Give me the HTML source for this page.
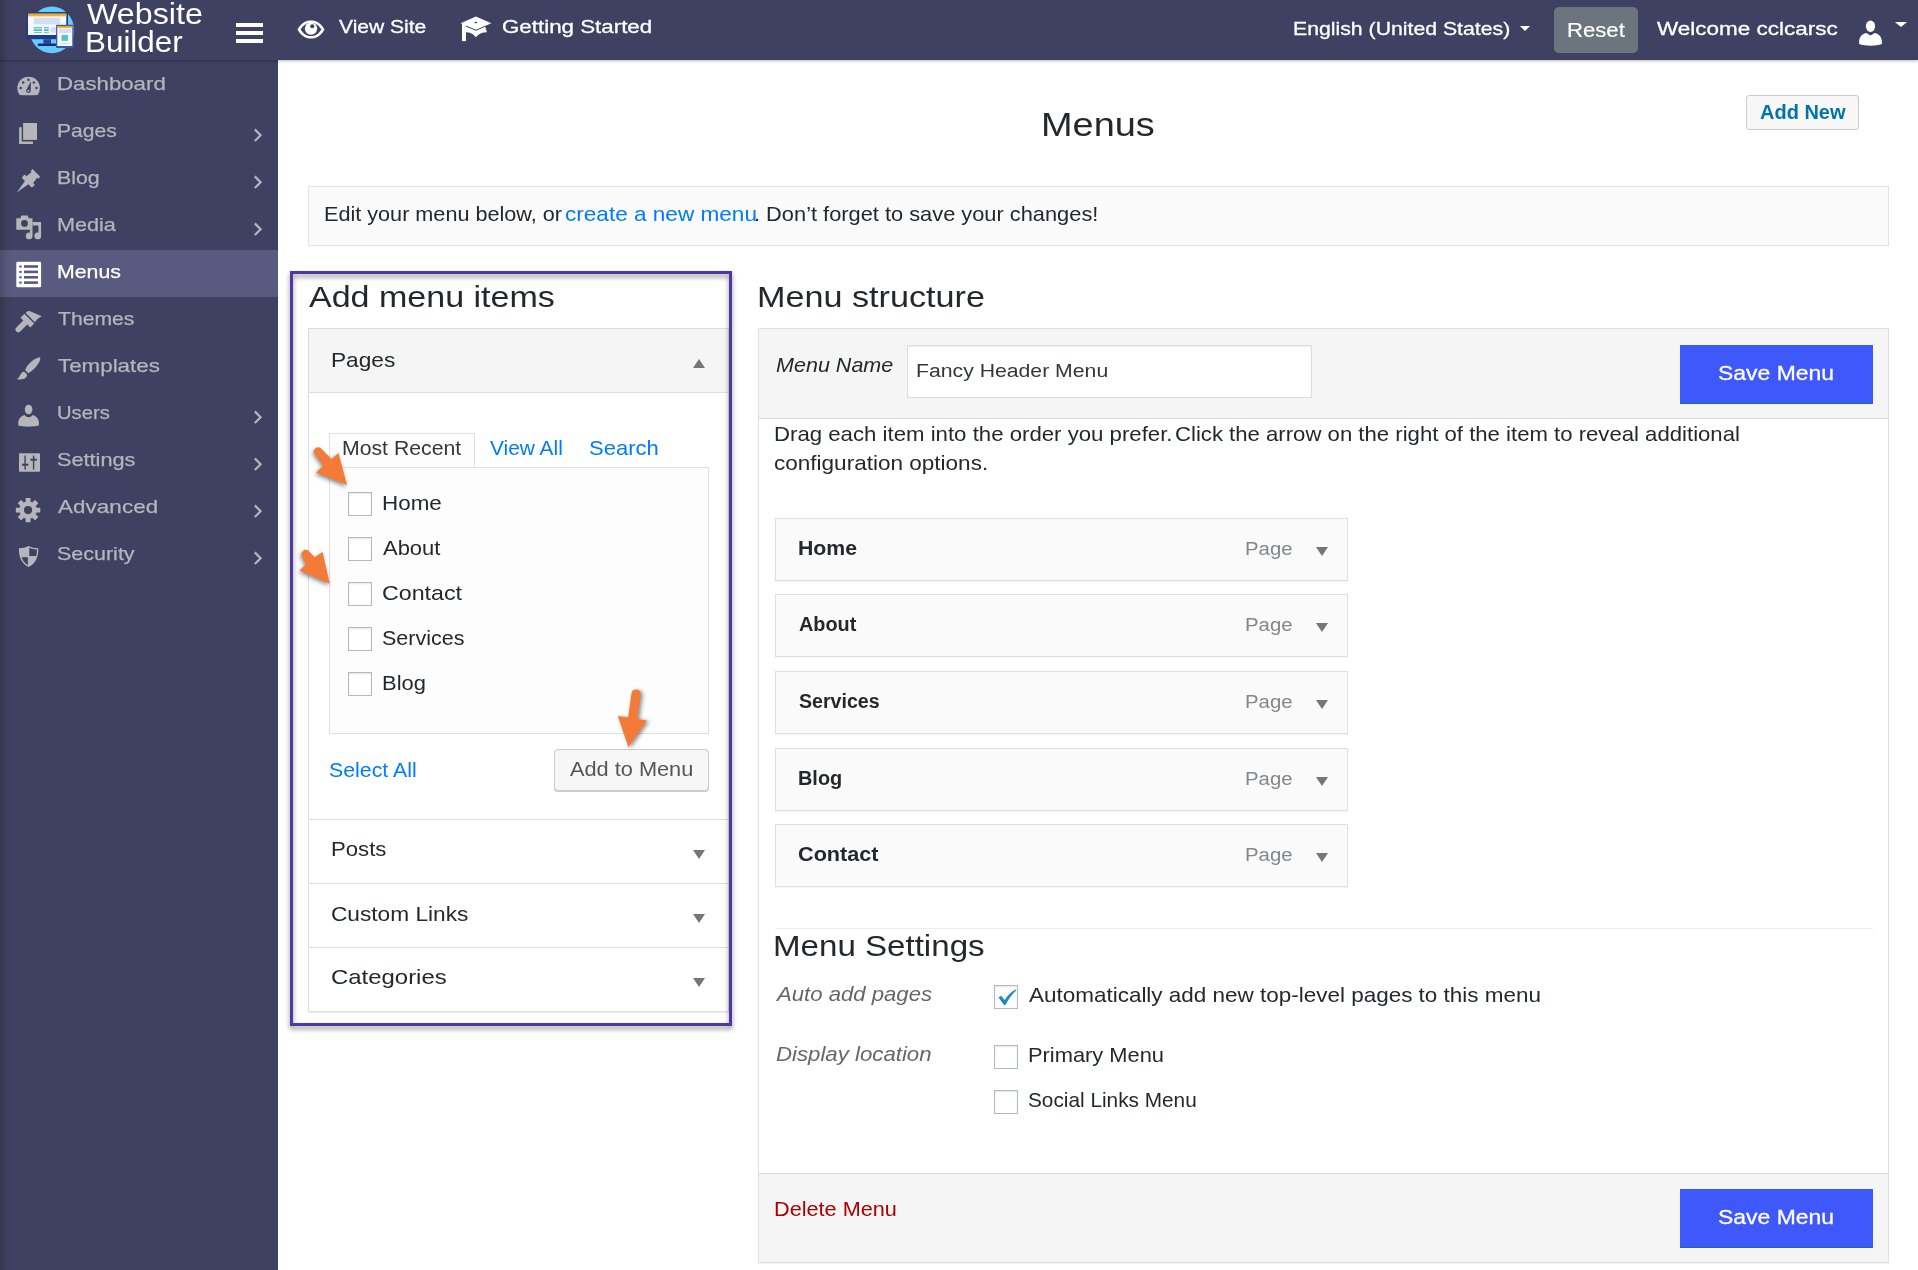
<!DOCTYPE html>
<html lang="en">
<head>
<meta charset="utf-8">
<title>Menus - Website Builder</title>
<style>
*{box-sizing:border-box}
html,body{margin:0;padding:0}
body{width:1918px;height:1270px;overflow:hidden;background:#fff;font-family:"Liberation Sans", Arial, sans-serif;color:#23282d;position:relative}
header,nav,main,section,ul,li,h1,h2,h3,p,form,label{margin:0;padding:0;list-style:none;font-weight:400;font-size:inherit}
a{color:#007bff;text-decoration:none}
.t{position:absolute;white-space:nowrap;line-height:1;display:block;transform-origin:0 0}
.b{position:absolute;display:block}
svg{position:absolute;overflow:visible;display:block}
/* top bar */
#topbar{left:0;top:0;width:1918px;height:60px;background:#3e4161;background-image:linear-gradient(to right,#34364f 0,#3a3c5b 5px,#3e4161 11px,#3e4161 100%);box-shadow:0 1px 3px rgba(0,0,0,.28);z-index:5}
#sidebar{left:0;top:60px;width:278px;height:1210px;background:#3e4161;background-image:linear-gradient(to right,#34364f 0,#3a3c5b 5px,#3e4161 11px);z-index:4}
#active{left:0;top:250px;width:278px;height:47px;background:#585a7f;background-image:linear-gradient(to right,#4b4d6c 0,#535578 5px,#585a7f 11px);z-index:4}
.z6{z-index:6}
#topbar ~ .t, header .t, header svg, header .b{z-index:6}
nav .t, nav svg{z-index:6}
.chev{stroke:#b5b5ba;stroke-width:2.2;fill:none}
/* generic boxes */
.cb{position:absolute;width:24px;height:24px;background:#fff;border:1px solid #b4b9be;box-shadow:inset 0 1px 2px rgba(0,0,0,.1)}
.tri{position:absolute;width:0;height:0;border-left:6px solid transparent;border-right:6px solid transparent;border-top:9px solid #72777c}
.tri.up{border-top:none;border-bottom:9px solid #72777c}
.item{position:absolute;left:775px;width:573px;height:62.500px;background:#fafafa;border:1px solid #dfdfdf;box-shadow:0 1px 1px rgba(0,0,0,.04)}
.savebtn{position:absolute;left:1680px;width:193px;height:59.400px;background:#3f58fb;border-bottom:1.400px solid #12709e}
</style>
</head>
<body>

<!-- ================= TOP BAR ================= -->
<header>
  <div class="b" id="topbar"></div>
  <!--LOGO-->
  <svg class="z6" style="left:20px;top:0" width="70" height="60" viewBox="20 0 70 60">
    <defs><linearGradient id="og" x1="0" y1="0" x2="0" y2="1"><stop offset="0" stop-color="#f39c12"/><stop offset="1" stop-color="#fbbf24"/></linearGradient></defs>
    <ellipse cx="51.800" cy="29.900" rx="22.300" ry="23.300" fill="#63cbff"/>
    <rect x="26.400" y="12" width="41.600" height="27.200" fill="#1e3a8c"/>
    <rect x="28" y="13.700" width="38.300" height="21.300" fill="#f7f7ff"/>
    <rect x="28" y="13.700" width="38.300" height="2.700" fill="url(#og)"/>
    <rect x="33.700" y="17.700" width="26.500" height="6.600" fill="#d6ddf8"/>
    <g fill="#3fc1c4"><rect x="33.700" y="27.200" width="8.300" height="1.200"/><rect x="33.700" y="29.300" width="8.300" height="1.700"/><rect x="33.700" y="32.100" width="8.300" height="0.800"/><rect x="44" y="27.200" width="4.800" height="1.200"/><rect x="44" y="29.300" width="4.800" height="1.700"/><rect x="44" y="32.100" width="4.800" height="0.800"/></g>
    <rect x="50.700" y="27" width="5.300" height="5.600" fill="#d6ddf8"/>
    <rect x="43.400" y="39.200" width="7.600" height="4.600" fill="#2546a0"/>
    <rect x="37.700" y="43.600" width="18.500" height="2.500" rx="1" fill="#172a78"/>
    <rect x="56.100" y="24.800" width="17.500" height="23.200" fill="#3558b0"/>
    <rect x="57.300" y="26" width="15" height="20" fill="#f7f7ff"/>
    <rect x="57.300" y="26" width="15" height="2.100" fill="url(#og)"/>
    <rect x="59" y="28.800" width="12" height="4.200" fill="#d6ddf8"/>
    <rect x="61.500" y="35" width="6.500" height="5.900" fill="#52c7c9"/>
    <rect x="60.500" y="43" width="8.500" height="0.800" fill="#c9d2f3"/>
  </svg>
  <h1><span class="t" id="t_web" style="left:86.90px;top:-0.32px;font-size:28.63px;color:#ffffff;transform:scaleX(1.1261);">Website</span><span class="t" id="t_bld" style="left:85.28px;top:27.68px;font-size:28.63px;color:#ffffff;transform:scaleX(1.0964);">Builder</span></h1>
  <!-- hamburger -->
  <div class="b z6" style="left:236px;top:23px;width:27px;height:4px;background:#fff"></div>
  <div class="b z6" style="left:236px;top:31px;width:27px;height:4px;background:#fff"></div>
  <div class="b z6" style="left:236px;top:39px;width:27px;height:4px;background:#fff"></div>
  <!-- eye -->
  <svg class="z6" style="left:297px;top:20px" width="28" height="19" viewBox="0 0 28 19">
    <path d="M0.5 9.5 C5 1.5 10 0.5 14 0.5 C18 0.5 23 1.5 27.5 9.5 C23 17.5 18 18.5 14 18.5 C10 18.5 5 17.5 0.5 9.5 Z" fill="#fff"/>
    <path d="M3.6 9.5 C7 4 10.5 3 14 3 C17.5 3 21 4 24.4 9.5 C21 15 17.5 16 14 16 C10.500 16 7 15 3.6 9.5 Z" fill="#3e4161"/>
    <circle cx="14" cy="8.6" r="6.2" fill="#fff"/>
    <circle cx="15.2" cy="6.2" r="2" fill="#3e4161"/>
  </svg>
  <span class="t" id="t_view" style="left:339.00px;top:18.10px;font-size:18.80px;color:#ffffff;transform:scaleX(1.1202);-webkit-text-stroke:.3px #fff;">View Site</span>
  <!-- grad cap -->
  <svg class="z6" style="left:455px;top:10px" width="42" height="38" viewBox="455 10 42 38">
    <path d="M460.600 23.200 L475.900 16.600 L491.400 23.200 L475.900 29.700 Z" fill="#fff"/>
    <path d="M465.800 26.400 L475.900 30.800 L485.300 26.700 L486.900 32.300 C482 32.300 478.500 34 475.900 37.300 C473.300 34 470 32.300 465.800 32.300 Z" fill="#fff"/>
    <rect x="462" y="23.600" width="4" height="17.500" fill="#fff"/>
    <ellipse cx="475.800" cy="22.400" rx="1.400" ry="0.750" fill="#3e4161"/>
  </svg>
  <span class="t" id="t_get" style="left:502.18px;top:18.10px;font-size:18.80px;color:#ffffff;transform:scaleX(1.1888);-webkit-text-stroke:.3px #fff;">Getting Started</span>
  <span class="t" id="t_eng" style="left:1292.65px;top:20.10px;font-size:18.80px;color:#ffffff;transform:scaleX(1.1309);-webkit-text-stroke:.3px #fff;">English (United States)</span>
  <div class="tri z6" style="left:1520px;top:26px;border-left-width:5.5px;border-right-width:5.5px;border-top:5.5px solid #fff"></div>
  <div class="b z6" style="left:1554px;top:7px;width:84px;height:46px;border-radius:5px;background:#6c757d"></div>
  <span class="t" id="t_reset" style="left:1567.27px;top:19.80px;font-size:20.39px;color:#ffffff;transform:scaleX(1.0858);-webkit-text-stroke:.2px #fff;">Reset</span>
  <span class="t" id="t_welc" style="left:1656.79px;top:20.10px;font-size:18.80px;color:#ffffff;transform:scaleX(1.1969);-webkit-text-stroke:.3px #fff;">Welcome cclcarsc</span>
  <!-- user -->
  <svg class="z6" style="left:1850px;top:8px" width="68" height="46" viewBox="1850 8 68 46">
    <ellipse cx="1870.500" cy="26.300" rx="4.600" ry="5.700" fill="#fff"/>
    <path d="M1859.200 44 C1858.600 37.500 1861.500 34.200 1866.200 33 L1870.500 35.600 L1874.800 33 C1879.500 34.200 1882.500 37.500 1881.900 44 C1876 46.300 1865 46.300 1859.200 44 Z" fill="#fff"/>
    <path d="M1894.900 21.900 H1907.100 L1901 27.100 Z" fill="#fff"/>
  </svg>
</header>

<!-- ================= SIDEBAR ================= -->
<nav>
  <div class="b" id="sidebar"></div>
  <div class="b" id="active"></div>
  <ul>
    <li><svg style="left:0;top:66px" width="60" height="47" viewBox="0 66 60 47"><path d="M19.600 95 Q17.300 92 17.300 88 A11.300 11.300 0 0 1 39.900 88 Q39.900 92 37.600 95 Q28.600 95.500 19.600 95 Z" fill="#b5b5ba"/>
<g fill="#3e4161"><circle cx="20.700" cy="88" r="1.250"/><circle cx="23.200" cy="82.400" r="1.250"/><circle cx="28.400" cy="79.800" r="1.250"/><circle cx="33.900" cy="82.400" r="1.250"/><circle cx="36.500" cy="88" r="1.250"/>
<path d="M26.200 90.300 L30.900 81.300 L30.700 91.200 A2.300 2.300 0 0 1 26.200 90.300 Z"/></g><circle cx="28.400" cy="90.800" r="1" fill="#b5b5ba"/></svg><span class="t" id="s_dashboard" style="left:56.70px;top:75.33px;font-size:18.33px;color:#b5b5ba;transform:scaleX(1.2128);-webkit-text-stroke:.25px #b5b5ba;">Dashboard</span></li>
    <li><svg style="left:0;top:113px" width="60" height="47" viewBox="0 113 60 47"><rect x="23.100" y="123" width="13.900" height="16.900" fill="#b5b5ba"/><path d="M19.100 127.200 H21.700 V141.400 H33 V144.100 H19.100 Z" fill="#b5b5ba"/></svg><span class="t" id="s_pages" style="left:56.70px;top:122.33px;font-size:18.33px;color:#b5b5ba;transform:scaleX(1.1497);-webkit-text-stroke:.25px #b5b5ba;">Pages</span><svg style="left:250px;top:125.69999999999999px" width="16" height="18" viewBox="250 125.69999999999999 16 18"><path class="chev" d="M254.800 129.1 L260.600 134.9 L254.800 140.7"/></svg></li>
    <li><svg style="left:0;top:160px" width="60" height="47" viewBox="0 160 60 47"><g transform="translate(36.400 172.900) rotate(45)" fill="#b5b5ba"><path d="M-5.400 0 H5.400 V2.800 H4 L4.800 9.400 H7.200 Q7.700 12.800 6.600 13.800 H2.400 L0 27.800 L-2.400 13.800 H-6.600 Q-7.700 12.800 -7.200 9.400 H-4.800 L-4 2.800 H-5.400 Z"/></g></svg><span class="t" id="s_blog" style="left:56.70px;top:169.33px;font-size:18.33px;color:#b5b5ba;transform:scaleX(1.1655);-webkit-text-stroke:.25px #b5b5ba;">Blog</span><svg style="left:250px;top:172.7px" width="16" height="18" viewBox="250 172.7 16 18"><path class="chev" d="M254.800 176.1 L260.600 181.9 L254.800 187.7"/></svg></li>
    <li><svg style="left:0;top:207px" width="60" height="47" viewBox="0 207 60 47"><path d="M16.300 218.300 H20.200 L21.400 215.500 H27.600 L28.800 218.300 H32.500 V229.800 H16.300 Z" fill="#b5b5ba"/><circle cx="24.500" cy="223.400" r="3.400" fill="#3e4161"/>
<path d="M32.500 222.100 H41.100 V236 A3.350 3.350 0 1 1 38.400 232.700 V225.400 H32.500 Z" fill="#b5b5ba"/><path d="M29.900 229.800 H32.500 V236 A3.350 3.350 0 1 1 29.900 232.700 Z" fill="#b5b5ba"/></svg><span class="t" id="s_media" style="left:56.70px;top:216.33px;font-size:18.33px;color:#b5b5ba;transform:scaleX(1.1788);-webkit-text-stroke:.25px #b5b5ba;">Media</span><svg style="left:250px;top:219.7px" width="16" height="18" viewBox="250 219.7 16 18"><path class="chev" d="M254.800 223.1 L260.600 228.9 L254.800 234.7"/></svg></li>
    <li><svg style="left:0;top:254px" width="60" height="47" viewBox="0 254 60 47"><rect x="16.300" y="261.800" width="24.800" height="25.400" rx="1.200" fill="#fff"/><g fill="#585a7f"><rect x="24" y="265.2" width="14" height="2.600"/><rect x="19.200" y="265.5" width="2.500" height="2"/><rect x="24" y="270.6" width="14" height="2.600"/><rect x="19.200" y="270.9" width="2.500" height="2"/><rect x="24" y="276" width="14" height="2.600"/><rect x="19.200" y="276.3" width="2.500" height="2"/><rect x="24" y="281.3" width="14" height="2.600"/><rect x="19.200" y="281.6" width="2.500" height="2"/></g></svg><span class="t" id="s_menus" style="left:56.70px;top:263.33px;font-size:18.33px;color:#ffffff;transform:scaleX(1.1622);-webkit-text-stroke:.25px #ffffff;">Menus</span></li>
    <li><svg style="left:0;top:301px" width="60" height="47" viewBox="0 301 60 47"><path d="M18.300 329.400 L25.500 322.200" stroke="#b5b5ba" stroke-width="5.600" stroke-linecap="round" fill="none"/>
<path d="M21.300 317.700 L24.400 314.600 L33.400 323.600 L30.300 326.700 Z" fill="#b5b5ba" stroke="#b5b5ba" stroke-width="1.200" stroke-linejoin="round"/>
<path d="M25.700 313.100 Q26.400 310.700 29.600 310.900 L41.700 316.300 Q37 318.500 34.900 322.300 Z" fill="#b5b5ba"/></svg><span class="t" id="s_themes" style="left:57.60px;top:310.33px;font-size:18.33px;color:#b5b5ba;transform:scaleX(1.1541);-webkit-text-stroke:.25px #b5b5ba;">Themes</span></li>
    <li><svg style="left:0;top:348px" width="60" height="47" viewBox="0 348 60 47"><path d="M40.200 357.200 C41 360 37 368 28.200 373.200 L25.100 370.100 C27 364 35 357.500 40.200 357.200 Z" fill="#b5b5ba"/>
<path d="M24.100 371.400 L27 374.300 C27.500 378.500 22 380.600 16.800 378.900 C20.500 377.500 19.500 372.500 24.100 371.400 Z" fill="#b5b5ba"/></svg><span class="t" id="s_templates" style="left:57.60px;top:357.33px;font-size:18.33px;color:#b5b5ba;transform:scaleX(1.2191);-webkit-text-stroke:.25px #b5b5ba;">Templates</span></li>
    <li><svg style="left:0;top:395px" width="60" height="47" viewBox="0 395 60 47"><ellipse cx="28.600" cy="409.500" rx="3.800" ry="4.800" fill="#b5b5ba"/>
<path d="M18.300 425.600 C17.600 419 20.500 416.300 24.600 415 C26.800 418 30.400 418 32.600 415 C36.700 416.300 39.600 419 38.900 425.600 C34 427 23 427 18.300 425.600 Z" fill="#b5b5ba"/></svg><span class="t" id="s_users" style="left:56.70px;top:404.33px;font-size:18.33px;color:#b5b5ba;transform:scaleX(1.1018);-webkit-text-stroke:.25px #b5b5ba;">Users</span><svg style="left:250px;top:407.7px" width="16" height="18" viewBox="250 407.7 16 18"><path class="chev" d="M254.800 411.1 L260.600 416.9 L254.800 422.7"/></svg></li>
    <li><svg style="left:0;top:442px" width="60" height="47" viewBox="0 442 60 47"><rect x="19" y="453.300" width="21" height="18.500" rx="0.800" fill="#b5b5ba"/><g fill="#3e4161"><rect x="24.400" y="455.600" width="1.400" height="14"/><rect x="32.900" y="455.600" width="1.400" height="14"/><rect x="22" y="463.700" width="6.400" height="2"/><rect x="30.400" y="458.700" width="6.400" height="2"/></g></svg><span class="t" id="s_settings" style="left:56.70px;top:451.33px;font-size:18.33px;color:#b5b5ba;transform:scaleX(1.1840);-webkit-text-stroke:.25px #b5b5ba;">Settings</span><svg style="left:250px;top:454.7px" width="16" height="18" viewBox="250 454.7 16 18"><path class="chev" d="M254.800 458.1 L260.600 463.9 L254.800 469.7"/></svg></li>
    <li><svg style="left:0;top:489px" width="60" height="47" viewBox="0 489 60 47"><g transform="translate(28.060 510.100)"><g fill="#b5b5ba"><circle r="8.800"/><rect x="-2.450" y="-12.200" width="4.900" height="24.400" rx="0.600" transform="rotate(0)"/><rect x="-2.450" y="-12.200" width="4.900" height="24.400" rx="0.600" transform="rotate(45)"/><rect x="-2.450" y="-12.200" width="4.900" height="24.400" rx="0.600" transform="rotate(90)"/><rect x="-2.450" y="-12.200" width="4.900" height="24.400" rx="0.600" transform="rotate(135)"/></g><circle r="4.100" fill="#3e4161"/></g></svg><span class="t" id="s_advanced" style="left:57.60px;top:498.33px;font-size:18.33px;color:#b5b5ba;letter-spacing:0.079px;transform:scaleX(1.2200);-webkit-text-stroke:.25px #b5b5ba;">Advanced</span><svg style="left:250px;top:501.7px" width="16" height="18" viewBox="250 501.7 16 18"><path class="chev" d="M254.800 505.1 L260.600 510.9 L254.800 516.7"/></svg></li>
    <li><svg style="left:0;top:536px" width="60" height="47" viewBox="0 536 60 47"><path d="M28.600 546 C25.500 547.600 22.500 548.200 18.900 548.200 C18.700 556.500 21 563 28.600 567.100 C36.200 563 38.500 556.500 38.300 548.200 C34.700 548.200 31.700 547.600 28.600 546 Z" fill="#b5b5ba"/>
<path d="M29.300 547.700 C31.800 548.800 34.200 549.300 36.900 549.400 C36.900 552 36.700 554 36.300 555.900 H29.300 Z" fill="#3e4161"/>
<path d="M27.900 557.200 V565.200 C24.500 563 22.700 560.600 21.700 557.200 Z" fill="#3e4161"/></svg><span class="t" id="s_security" style="left:56.70px;top:545.33px;font-size:18.33px;color:#b5b5ba;transform:scaleX(1.1720);-webkit-text-stroke:.25px #b5b5ba;">Security</span><svg style="left:250px;top:548.7px" width="16" height="18" viewBox="250 548.7 16 18"><path class="chev" d="M254.800 552.1 L260.600 557.9 L254.800 563.7"/></svg></li>
  </ul>
</nav>

<!-- ================= MAIN ================= -->
<main>
  <h2><span class="t" id="m_title" style="left:1040.62px;top:107.00px;font-size:33.99px;color:#23282d;transform:scaleX(1.1149);">Menus</span></h2>
  <div class="b" style="left:1746px;top:95px;width:113px;height:35px;background:#f7f7f7;border:1px solid #ccc;border-radius:3px"></div>
  <span class="t" id="m_addnew" style="left:1760.00px;top:101.85px;font-size:20.50px;color:#0073aa;transform:scaleX(0.9744);font-weight:700;">Add New</span>
  <div class="b" style="left:308px;top:186px;width:1581px;height:60px;background:#fafafa;border:1px solid #e3e3e3"></div>
  <p><span class="t" id="m_info1" style="left:323.65px;top:203.96px;font-size:20.09px;color:#23282d;transform:scaleX(1.0770);">Edit your menu below, or</span><a><span class="t" id="m_info2" style="left:565.17px;top:203.96px;font-size:20.09px;color:#007bff;transform:scaleX(1.1240);">create a new menu</span></a><span class="t" id="m_info3" style="left:753.99px;top:203.96px;font-size:20.09px;color:#23282d;transform:scaleX(1.0864);">. Don’t forget to save your changes!</span></p>

  <!-- ===== left column: add menu items ===== -->
  <section id="add-items">
    <h3><span class="t" id="m_h_add" style="left:309.40px;top:281.67px;font-size:29.66px;color:#23282d;transform:scaleX(1.1470);">Add menu items</span></h3>
    <!-- accordion container -->
    <div class="b" style="left:308px;top:328px;width:421px;height:684px;background:#fff;border:1px solid #dddddd;box-shadow:0 1px 1px rgba(0,0,0,.06)"></div>
    <div class="b" style="left:309px;top:329px;width:419px;height:64px;background:#f5f5f5;border-bottom:1px solid #dddddd"></div>
    <span class="t" id="a_pages" style="left:330.73px;top:348.99px;font-size:21.01px;color:#23282d;transform:scaleX(1.0797);">Pages</span>
    <div class="tri up" style="left:693px;top:358.500px"></div>
    <!-- tabs -->
    <div class="b" style="left:329px;top:467px;width:380px;height:267px;background:#fdfdfd;border:1px solid #dfdfdf"></div>
    <div class="b" style="left:329px;top:433px;width:146px;height:34px;background:#fdfdfd;border:1px solid #dfdfdf;border-bottom:none"></div>
    <span class="t" id="a_mr" style="left:342.20px;top:437.96px;font-size:20.09px;color:#32373c;transform:scaleX(1.0575);">Most Recent</span><a><span class="t" id="a_va" style="left:490.20px;top:437.96px;font-size:20.09px;color:#007bff;transform:scaleX(1.0414);">View All</span></a><a><span class="t" id="a_se" style="left:589.41px;top:437.96px;font-size:20.09px;color:#007bff;transform:scaleX(1.0955);">Search</span></a>
    <ul>
      <li><span class="cb" style="left:348px;top:492px"></span><span class="t" id="c_home" style="left:382.46px;top:492.96px;font-size:20.09px;color:#23282d;transform:scaleX(1.1157);">Home</span></li>
      <li><span class="cb" style="left:348px;top:537px"></span><span class="t" id="c_about" style="left:383.36px;top:537.96px;font-size:20.09px;color:#23282d;transform:scaleX(1.0923);">About</span></li>
      <li><span class="cb" style="left:348px;top:582px"></span><span class="t" id="c_contact" style="left:382.46px;top:582.96px;font-size:20.09px;color:#23282d;transform:scaleX(1.1559);">Contact</span></li>
      <li><span class="cb" style="left:348px;top:627px"></span><span class="t" id="c_services" style="left:382.46px;top:627.96px;font-size:20.09px;color:#23282d;transform:scaleX(1.0712);">Services</span></li>
      <li><span class="cb" style="left:348px;top:672px"></span><span class="t" id="c_blog" style="left:382.46px;top:672.96px;font-size:20.09px;color:#23282d;transform:scaleX(1.0921);">Blog</span></li>
    </ul>
    <a><span class="t" id="a_selall" style="left:328.65px;top:759.96px;font-size:20.09px;color:#007bff;transform:scaleX(1.0618);">Select All</span></a>
    <div class="b" style="left:554px;top:749px;width:155px;height:42px;background:#f7f7f7;border:1px solid #cccccc;border-radius:4px;box-shadow:0 1px 0 #cccccc"></div>
    <span class="t" id="a_addto" style="left:569.60px;top:758.96px;font-size:20.09px;color:#555555;transform:scaleX(1.0827);">Add to Menu</span>
    <div class="b" style="left:309px;top:819px;width:419px;height:1px;background:#dddddd"></div>
    <span class="t" id="a_posts" style="left:330.73px;top:837.99px;font-size:21.01px;color:#23282d;transform:scaleX(1.0538);">Posts</span><div class="tri" style="left:693px;top:849.500px"></div>
    <div class="b" style="left:309px;top:883px;width:419px;height:1px;background:#dddddd"></div>
    <span class="t" id="a_custom" style="left:330.73px;top:902.99px;font-size:21.01px;color:#23282d;transform:scaleX(1.0797);">Custom Links</span><div class="tri" style="left:693px;top:913.500px"></div>
    <div class="b" style="left:309px;top:947px;width:419px;height:1px;background:#dddddd"></div>
    <span class="t" id="a_cats" style="left:330.73px;top:965.99px;font-size:21.01px;color:#23282d;transform:scaleX(1.1390);">Categories</span><div class="tri" style="left:693px;top:977.500px"></div>
  </section>

  <!-- ===== right column: menu structure ===== -->
  <section id="menu-structure">
    <h3><span class="t" id="m_h_struct" style="left:756.80px;top:281.67px;font-size:29.66px;color:#23282d;transform:scaleX(1.1528);">Menu structure</span></h3>
    <div class="b" style="left:758px;top:328px;width:1131px;height:935px;background:#fff;border:1px solid #e0e0e0;box-shadow:0 1px 1px rgba(0,0,0,.04)"></div>
    <div class="b" style="left:759px;top:329px;width:1129px;height:90px;background:#f5f5f5;border-bottom:1px solid #dddddd"></div>
    <label><span class="t" id="r_mname" style="left:775.98px;top:354.96px;font-size:20.09px;color:#23282d;transform:scaleX(1.0723);font-style:italic;">Menu Name</span></label>
    <div class="b" style="left:907px;top:345px;width:405px;height:53px;background:#fff;border:1px solid #dddddd;box-shadow:inset 0 1px 2px rgba(0,0,0,.07)"></div>
    <span class="t" id="r_fancy" style="left:915.84px;top:362.08px;font-size:18.85px;color:#32373c;transform:scaleX(1.1257);">Fancy Header Menu</span>
    <div class="savebtn" style="top:345px"></div><span class="t" id="r_save1" style="left:1718.46px;top:363.05px;font-size:20.91px;color:#ffffff;transform:scaleX(1.0970);-webkit-text-stroke:.3px #fff;">Save Menu</span>
    <p><span class="t" id="r_drag1a" style="left:774.17px;top:423.96px;font-size:20.09px;color:#23282d;transform:scaleX(1.1055);">Drag each item into the order you prefer.</span><span class="t" id="r_drag1b" style="left:1175.03px;top:423.96px;font-size:20.09px;color:#23282d;transform:scaleX(1.1028);">Click the arrow on the right of the item to reveal additional</span><span class="t" id="r_drag2" style="left:774.17px;top:452.96px;font-size:20.09px;color:#23282d;transform:scaleX(1.1221);">configuration options.</span></p>
    <ul>
      <li><div class="item" style="top:518px"></div><span class="t" id="i_home" style="left:798.41px;top:537.96px;font-size:20.09px;color:#23282d;transform:scaleX(1.0572);font-weight:700;">Home</span><span class="t" id="p_page0" style="left:1244.89px;top:539.54px;font-size:18.13px;color:#82878c;transform:scaleX(1.1244);">Page</span><div class="tri" style="left:1316px;top:547px"></div></li>
      <li><div class="item" style="top:594px"></div><span class="t" id="i_about" style="left:799.40px;top:613.96px;font-size:20.09px;color:#23282d;transform:scaleX(0.9882);font-weight:700;">About</span><span class="t" id="p_page1" style="left:1244.89px;top:615.54px;font-size:18.13px;color:#82878c;transform:scaleX(1.1244);">Page</span><div class="tri" style="left:1316px;top:623px"></div></li>
      <li><div class="item" style="top:671px"></div><span class="t" id="i_services" style="left:799.40px;top:690.96px;font-size:20.09px;color:#23282d;transform:scaleX(0.9762);font-weight:700;">Services</span><span class="t" id="p_page2" style="left:1244.89px;top:692.54px;font-size:18.13px;color:#82878c;transform:scaleX(1.1244);">Page</span><div class="tri" style="left:1316px;top:700px"></div></li>
      <li><div class="item" style="top:748px"></div><span class="t" id="i_blog" style="left:798.23px;top:767.96px;font-size:20.09px;color:#23282d;transform:scaleX(0.9899);font-weight:700;">Blog</span><span class="t" id="p_page3" style="left:1244.89px;top:769.54px;font-size:18.13px;color:#82878c;transform:scaleX(1.1244);">Page</span><div class="tri" style="left:1316px;top:777px"></div></li>
      <li><div class="item" style="top:824px"></div><span class="t" id="i_contact" style="left:798.41px;top:843.96px;font-size:20.09px;color:#23282d;transform:scaleX(1.0782);font-weight:700;">Contact</span><span class="t" id="p_page4" style="left:1244.89px;top:845.54px;font-size:18.13px;color:#82878c;transform:scaleX(1.1244);">Page</span><div class="tri" style="left:1316px;top:853px"></div></li>
    </ul>
    <div class="b" style="left:775px;top:928px;width:1098px;height:1px;background:#eeeeee"></div>
    <h3><span class="t" id="r_settings" style="left:773.27px;top:930.67px;font-size:29.66px;color:#23282d;transform:scaleX(1.1161);">Menu Settings</span></h3>
    <span class="t" id="r_auto" style="left:776.92px;top:983.96px;font-size:20.09px;color:#666666;transform:scaleX(1.1019);font-style:italic;">Auto add pages</span>
    <span class="cb" style="left:994px;top:985px"></span>
    <svg style="left:997px;top:989px" width="20" height="17" viewBox="0 0 20 17"><path d="M1.500 8.500 L4.200 6.800 L7.800 11 C10.500 6.500 14 2.800 18.500 0.500 L19.200 1.500 C15 5.500 11.500 10 8.500 16 H7 Z" fill="#1e8cbe"/></svg>
    <span class="t" id="r_autotxt" style="left:1029.25px;top:984.96px;font-size:20.09px;color:#23282d;transform:scaleX(1.1189);">Automatically add new top-level pages to this menu</span>
    <span class="t" id="r_disp" style="left:776.25px;top:1043.96px;font-size:20.09px;color:#666666;transform:scaleX(1.1062);font-style:italic;">Display location</span>
    <span class="cb" style="left:994px;top:1045px"></span><span class="t" id="r_prim" style="left:1027.89px;top:1044.96px;font-size:20.09px;color:#23282d;transform:scaleX(1.0886);">Primary Menu</span>
    <span class="cb" style="left:994px;top:1090px"></span><span class="t" id="r_soc" style="left:1027.89px;top:1089.96px;font-size:20.09px;color:#23282d;transform:scaleX(1.0353);">Social Links Menu</span>
    <div class="b" style="left:759px;top:1173px;width:1129px;height:89px;background:#f5f5f5;border-top:1px solid #dddddd"></div>
    <a><span class="t" id="r_del" style="left:774.41px;top:1198.96px;font-size:20.09px;color:#aa0000;transform:scaleX(1.0790);">Delete Menu</span></a>
    <div class="savebtn" style="top:1189px"></div><span class="t" id="r_save2" style="left:1718.46px;top:1207.05px;font-size:20.91px;color:#ffffff;transform:scaleX(1.0970);-webkit-text-stroke:.3px #fff;">Save Menu</span>
  </section>

  <!-- ===== annotations ===== -->
  <div class="b" style="left:290px;top:271px;width:442px;height:755px;border:3px solid #5138a0;filter:drop-shadow(0 3px 2.500px rgba(0,0,0,.45));pointer-events:none"></div>
  <svg style="left:0;top:0;filter:drop-shadow(-1px 2.500px 2px rgba(0,0,0,.45))" width="1918" height="1270" viewBox="0 0 1918 1270">
    <g fill="#f47a38" stroke="none">
      <path d="M314.700 454.100 A4.300 4.300 0 0 1 320.700 448.100 L331.400 459.100 L338.500 453 L347 484.900 L316 472.600 L323.400 465.700 Z"/>
      <path d="M302.500 557.300 A4.400 4.400 0 0 1 308.700 551.100 L314.600 557.200 L322.600 552 L329.700 583.700 L299.700 570.500 L306 564.600 Z"/>
    </g>
  </svg>
  <svg style="left:0;top:0;filter:drop-shadow(2px 1.500px 2px rgba(0,0,0,.45))" width="1918" height="1270" viewBox="0 0 1918 1270">
    <path fill="#f47a38" d="M631.500 693.200 A4.650 4.650 0 0 1 640.700 694.200 L637.300 719 L647 720.500 L628.400 747.300 L617.800 716 L628.100 717.500 Z"/>
  </svg>
</main>


</body>
</html>
